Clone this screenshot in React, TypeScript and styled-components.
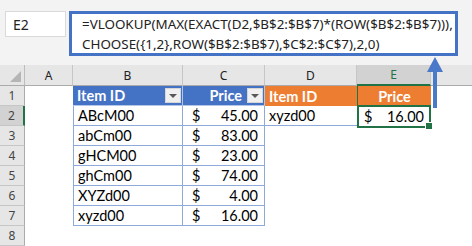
import styled, { createGlobalStyle } from "styled-components";

const GlobalStyle = createGlobalStyle`
  html, body {
    margin: 0;
    padding: 0;
    background: #ffffff;
  }
  body {
    width: 472px;
    height: 246px;
    overflow: hidden;
  }
`;

const GREEN = "#217346";
const TABLE_BLUE = "#4472c4";
const TABLE_LINE = "#8eaadb";
const ORANGE = "#ed7d31";

const columns = ["A", "B", "C", "D", "E"];

const rows = [
  { id: "ABcM00", price: "45.00" },
  { id: "abCm00", price: "83.00" },
  { id: "gHCM00", price: "23.00" },
  { id: "ghCm00", price: "74.00" },
  { id: "XYZd00", price: "4.00" },
  { id: "xyzd00", price: "16.00" },
];

export default function App() {
  return (
    <Sheet>
      <GlobalStyle />
      <TopBar>
        <NameBox>E2</NameBox>
        <FormulaBox>
          <div>=VLOOKUP(MAX(EXACT(D2,$B$2:$B$7)*(ROW($B$2:$B$7))),</div>
          <div>CHOOSE({"{"}1,2{"}"},ROW($B$2:$B$7),$C$2:$C$7),2,0)</div>
        </FormulaBox>
      </TopBar>

      <Grid>
        <Corner>
          <CornerTriangle />
        </Corner>
        {columns.map((c) => (
          <ColHead key={c} $active={c === "E"}>
            {c}
          </ColHead>
        ))}
        <ColFiller />

        {/* row 1 */}
        <RowHead>1</RowHead>
        <Cell />
        <TableHead>
          <span>Item ID</span>
          <FilterButton />
        </TableHead>
        <TableHead $right>
          <span>Price</span>
          <FilterButton />
        </TableHead>
        <ResultHead>Item ID</ResultHead>
        <ResultHead $center $selected>
          Price
        </ResultHead>
        <Cell />

        {rows.map((r, i) => {
          const n = i + 2;
          return [
            <RowHead key={`h${n}`} $active={n === 2}>
              {n}
            </RowHead>,
            <Cell key={`a${n}`} />,
            <TableCell key={`b${n}`} $first>
              {r.id}
            </TableCell>,
            <TableCell key={`c${n}`}>
              <Money>
                <span>$</span>
                <span>{r.price}</span>
              </Money>
            </TableCell>,
            n === 2 ? (
              <LookupCell key={`d${n}`}>xyzd00</LookupCell>
            ) : (
              <Cell key={`d${n}`} />
            ),
            n === 2 ? (
              <ActiveCell key={`e${n}`}>
                <Money>
                  <span>$</span>
                  <span>16.00</span>
                </Money>
                <FillHandle />
              </ActiveCell>
            ) : (
              <Cell key={`e${n}`} />
            ),
            <Cell key={`f${n}`} />,
          ];
        })}

        <RowHead>8</RowHead>
        <Cell />
        <Cell />
        <Cell />
        <Cell />
        <Cell />
        <Cell />
      </Grid>

      <Arrow width="18" height="51" viewBox="0 0 18 51">
        <rect x="7" y="14" width="4" height="37" fill="#4a79c9" />
        <polygon points="9,0 1,15 17,15" fill="#4a79c9" />
      </Arrow>
    </Sheet>
  );
}

const Sheet = styled.div`
  position: relative;
  width: 472px;
  height: 246px;
  overflow: hidden;
  font-family: "Liberation Sans", Arial, sans-serif;
  color: #000;
`;

const TopBar = styled.div`
  height: 65px;
  box-sizing: border-box;
  background: #f3f3f3;
  display: flex;
  align-items: flex-start;
  gap: 3px;
  padding: 11px 0 0 5px;
`;

const NameBox = styled.div`
  width: 61px;
  height: 26px;
  box-sizing: border-box;
  background: #fff;
  border: 1px solid #dadada;
  display: flex;
  align-items: center;
  padding-left: 7px;
  font-family: "Noto Sans", sans-serif;
  font-size: 14px;
  color: #222;
`;

const FormulaBox = styled.div`
  width: 389px;
  height: 45px;
  box-sizing: border-box;
  background: #fff;
  border: 3px solid ${TABLE_BLUE};
  padding: 0 0 0 10px;
  font-family: "Noto Sans", sans-serif;
  font-size: 13.4px;
  line-height: 20px;
  color: #222;
  white-space: nowrap;
`;

const Grid = styled.div`
  display: grid;
  grid-template-columns: 25px 48px 110px 82px 92px 74px 1fr;
  grid-template-rows: 21px repeat(8, 20px);
  font-family: "Lato", sans-serif;
  font-size: 14.5px;
`;

const Corner = styled.div`
  position: relative;
  background: #e6e6e6;
  border-right: 1px solid #bdbdbd;
  border-bottom: 1px solid #ababab;
`;

const CornerTriangle = styled.div`
  position: absolute;
  right: 3px;
  bottom: 3px;
  width: 0;
  height: 0;
  border-left: 11px solid transparent;
  border-bottom: 11px solid #b5b5b5;
`;

const ColHead = styled.div<{ $active?: boolean }>`
  background: ${(p) => (p.$active ? "#d2d2d2" : "#e6e6e6")};
  border-right: 1px solid #c6c6c6;
  border-bottom: ${(p) => (p.$active ? `2px solid ${GREEN}` : "1px solid #ababab")};
  color: ${(p) => (p.$active ? GREEN : "#222")};
  font-family: "Noto Sans", sans-serif;
  font-size: 12px;
  display: flex;
  align-items: center;
  justify-content: center;
  box-sizing: border-box;
`;

const ColFiller = styled.div`
  background: #e6e6e6;
  border-bottom: 1px solid #ababab;
`;

const RowHead = styled.div<{ $active?: boolean }>`
  background: ${(p) => (p.$active ? "#d2d2d2" : "#e6e6e6")};
  border-right: ${(p) => (p.$active ? `2px solid ${GREEN}` : "1px solid #ababab")};
  border-bottom: 1px solid #c6c6c6;
  color: #444;
  font-family: "Noto Sans", sans-serif;
  font-size: 12px;
  display: flex;
  align-items: center;
  justify-content: center;
  box-sizing: border-box;
`;

const Cell = styled.div`
  background: #fff;
`;

const TableHead = styled.div<{ $right?: boolean }>`
  background: ${TABLE_BLUE};
  color: #fff;
  font-weight: 700;
  display: flex;
  align-items: center;
  justify-content: ${(p) => (p.$right ? "flex-end" : "space-between")};
  gap: 5px;
  padding: 0 1px 0 4px;
  border-right: 1px solid #b4c6e7;
  border-bottom: 1px solid #b4c6e7;
  box-sizing: border-box;
`;

const FilterButton = styled.div`
  width: 16px;
  height: 15px;
  box-sizing: border-box;
  background: #f0f0f0;
  border: 1px solid #d6d6d6;
  display: flex;
  align-items: center;
  justify-content: center;

  &::after {
    content: "";
    width: 0;
    height: 0;
    border-left: 4px solid transparent;
    border-right: 4px solid transparent;
    border-top: 4px solid #595959;
  }
`;

const ResultHead = styled.div<{ $center?: boolean; $selected?: boolean }>`
  background: ${ORANGE};
  color: #fff;
  font-weight: 700;
  display: flex;
  align-items: center;
  justify-content: ${(p) => (p.$center ? "center" : "flex-start")};
  padding-left: ${(p) => (p.$center ? "0" : "4px")};
  border-left: ${(p) => (p.$selected ? `1px solid ${GREEN}` : "none")};
  box-sizing: border-box;
`;

const TableCell = styled.div<{ $first?: boolean }>`
  background: #fff;
  display: flex;
  align-items: center;
  padding: 0 4px;
  border-right: 1px solid ${TABLE_LINE};
  border-bottom: 1px solid ${TABLE_LINE};
  border-left: ${(p) => (p.$first ? `1px solid ${TABLE_LINE}` : "none")};
  box-sizing: border-box;
`;

const Money = styled.div`
  flex: 1;
  display: flex;
  justify-content: space-between;
  padding: 0 2px 0 5px;
`;

const LookupCell = styled.div`
  background: #fff;
  display: flex;
  align-items: center;
  padding-left: 4px;
  border-bottom: 1px solid ${TABLE_LINE};
  box-sizing: border-box;
`;

const ActiveCell = styled.div`
  position: relative;
  background: #fff;
  display: flex;
  align-items: center;
  padding-right: 3px;
  border: 2px solid ${GREEN};
  margin: -1px 0 -2px 0;
  box-sizing: border-box;
`;

const FillHandle = styled.div`
  position: absolute;
  right: -4px;
  bottom: -4px;
  width: 6px;
  height: 6px;
  background: ${GREEN};
  border: 1px solid #fff;
`;

const Arrow = styled.svg`
  position: absolute;
  left: 426px;
  top: 57px;
`;
